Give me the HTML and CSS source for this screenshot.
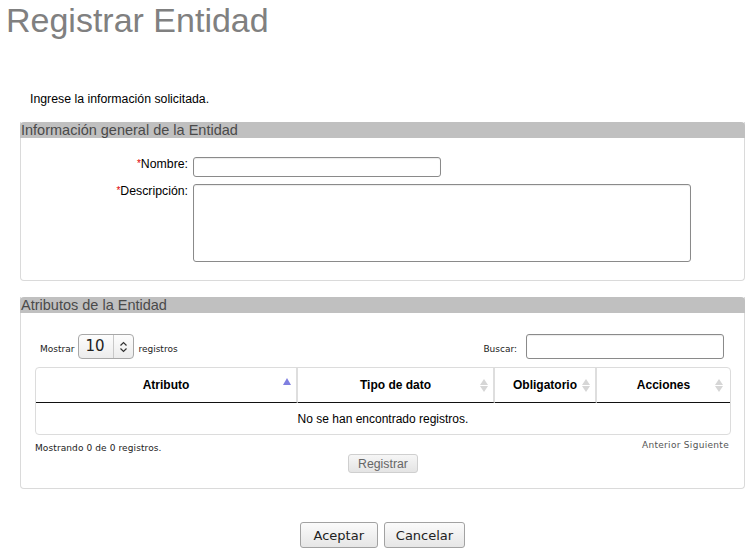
FILE: index.html
```html
<!DOCTYPE html>
<html lang="es">
<head>
<meta charset="utf-8">
<title>Registrar Entidad</title>
<link rel="stylesheet" href="styles.css">
</head>
<body>
<h1 class="page-title">Registrar Entidad</h1>
<p class="intro">Ingrese la información solicitada.</p>

<section class="panel">
  <div class="panel-head">Información general de la Entidad</div>
  <div class="form-grid">
    <label class="field-label" for="nombre"><span class="req">*</span>Nombre:</label>
    <input class="text-input name-input" id="nombre" type="text">
    <label class="field-label" for="descripcion"><span class="req">*</span>Descripción:</label>
    <textarea class="text-input desc-input" id="descripcion"></textarea>
  </div>
</section>

<section class="panel panel-table">
  <div class="panel-head">Atributos de la Entidad</div>
  <div class="table-tools">
    <div class="length">
      <span class="small">Mostrar</span>
      <div class="select-box">
        <span class="select-value">10</span>
        <span class="select-arrow">
          <svg width="9" height="12" viewBox="0 0 9 12"><path d="M1.5 4.5 L4.5 1.5 L7.5 4.5 M1.5 7.5 L4.5 10.5 L7.5 7.5" fill="none" stroke="#333" stroke-width="1.2"/></svg>
        </span>
      </div>
      <span class="small">registros</span>
    </div>
    <div class="search">
      <span class="small">Buscar:</span>
      <input class="text-input search-input" type="text">
    </div>
  </div>

  <table class="data-table">
    <thead>
      <tr>
        <th class="col-a">Atributo<span class="sort sort-asc"><svg width="8" height="7" viewBox="0 0 8 7"><path d="M4 0 L8 7 L0 7 Z" fill="#7f7fe0"/></svg></span></th>
        <th class="col-b">Tipo de dato<span class="sort"><svg width="8" height="13" viewBox="0 0 8 13"><path d="M4 0 L8 6 L0 6 Z M0 7 L8 7 L4 13 Z" fill="#d6d6d6"/></svg></span></th>
        <th class="col-c">Obligatorio<span class="sort"><svg width="8" height="13" viewBox="0 0 8 13"><path d="M4 0 L8 6 L0 6 Z M0 7 L8 7 L4 13 Z" fill="#d6d6d6"/></svg></span></th>
        <th class="col-d">Acciones<span class="sort"><svg width="8" height="13" viewBox="0 0 8 13"><path d="M4 0 L8 6 L0 6 Z M0 7 L8 7 L4 13 Z" fill="#d6d6d6"/></svg></span></th>
      </tr>
    </thead>
    <tbody>
      <tr><td colspan="4" class="empty">No se han encontrado registros.</td></tr>
    </tbody>
  </table>

  <div class="table-foot">
    <span class="small info">Mostrando 0 de 0 registros.</span>
    <span class="small pager">Anterior Siguiente</span>
  </div>
  <div class="register-row">
    <button class="btn btn-disabled" type="button">Registrar</button>
  </div>
</section>

<div class="actions">
  <button class="btn btn-main" type="button">Aceptar</button>
  <button class="btn btn-main" type="button">Cancelar</button>
</div>
</body>
</html>
```

FILE: styles.css
```css
* { box-sizing: border-box; }

body {
  margin: 0;
  font-family: "Liberation Sans", Arial, sans-serif;
  font-size: 12px;
  color: #000;
  background: #fff;
}

.page-title {
  margin: 0 0 0 6px;
  padding-top: 1px;
  font-size: 34px;
  line-height: 38px;
  font-weight: normal;
  color: #808080;
}

.intro {
  margin: 53px 0 0 30px;
  font-size: 12.3px;
  line-height: 14px;
}

.panel {
  margin: 16px 11px 0 20px;
  border: 1px solid #dadada;
  border-top: none;
  border-radius: 0 0 4px 4px;
}

.panel-head {
  margin: 0 -1px;
  height: 16px;
  line-height: 16px;
  font-size: 14.5px;
  color: #4a4a4a;
  background: #c0c0c0;
  border-radius: 4px 4px 0 0;
  padding-left: 1px;
  white-space: nowrap;
}

.form-grid {
  display: grid;
  grid-template-columns: 167px auto;
  column-gap: 5px;
  row-gap: 7px;
  padding: 19px 0 18px;
  align-items: start;
}

.field-label {
  text-align: right;
  font-size: 12.3px;
  line-height: 14px;
}

.req { color: #e00000; font-size: 10px; vertical-align: 1px; }

.text-input {
  display: block;
  margin: 0;
  border: 1px solid #8a8a8a;
  border-radius: 3px;
  background: #fff;
  box-shadow: inset 0 1px 1px rgba(0,0,0,0.08);
  font-family: "Liberation Sans", Arial, sans-serif;
  font-size: 12px;
}

.name-input { width: 248px; height: 20px; }
.desc-input { width: 498px; height: 78px; resize: none; }

.panel-table { padding: 0 13px 15px 14px; }
.panel-table .panel-head { margin: 0 -14px 0 -15px; }

.small {
  font-family: "DejaVu Sans", sans-serif;
  font-size: 9px;
  line-height: 11px;
  color: #222;
}

.table-tools {
  display: flex;
  justify-content: space-between;
  align-items: flex-end;
  margin-top: 21px;
  height: 25px;
  padding-left: 5px;
  padding-right: 7px;
}

.length, .search {
  display: flex;
  align-items: flex-end;
}

.length > .small, .search > .small { margin-bottom: 4px; }
.length .small:first-child { margin-right: 4px; }
.length .small:last-child { margin-left: 4px; }

.select-box {
  display: flex;
  align-items: stretch;
  width: 56px;
  height: 25px;
  border: 1px solid #a8a8a8;
  border-radius: 4px;
  background: linear-gradient(#fdfdfd, #ececec);
}

.select-value {
  flex: 1;
  padding-left: 6px;
  font-family: "DejaVu Sans", sans-serif;
  font-size: 15px;
  line-height: 23px;
  color: #222;
}

.select-arrow {
  width: 20px;
  border-left: 1px solid #c8c8c8;
  display: flex;
  align-items: center;
  justify-content: center;
}

.search .small { margin-right: 9px; }
.search-input { width: 198px; height: 25px; }

.data-table {
  margin-top: 8px;
  width: 696px;
  border-collapse: separate;
  border-spacing: 0;
  border: 1px solid #dcdcdc;
  border-radius: 4px;
  table-layout: fixed;
}

.data-table th {
  position: relative;
  height: 35px;
  font-weight: bold;
  font-size: 12px;
  text-align: center;
  border-bottom: 1px solid #111;
  border-right: 2px solid #dedede;
  padding: 0;
}

.data-table th:last-child { border-right: none; }

.col-a { width: 262px; }
.col-b { width: 197px; }
.col-c { width: 102px; }
.col-d { width: auto; }

.sort {
  position: absolute;
  right: 5px;
  top: 11px;
  line-height: 0;
}

.col-d .sort { right: 7px; }
.sort-asc { top: 10px; }

.empty {
  height: 31px;
  text-align: center;
  font-size: 12px;
  padding: 0;
}

.table-foot {
  display: flex;
  justify-content: space-between;
  align-items: flex-start;
  height: 19px;
  padding-top: 5px;
  padding-right: 2px;
}

.info { margin-top: 3px; letter-spacing: 0.1px; }
.pager { color: #555; letter-spacing: 0.3px; }

.register-row { text-align: center; }

.btn {
  font-family: "DejaVu Sans", sans-serif;
  cursor: pointer;
  margin: 0;
}

.btn-disabled {
  height: 19px;
  padding: 0 9px;
  font-family: "Liberation Sans", Arial, sans-serif;
  font-size: 12.3px;
  color: #666;
  border: 1px solid #cfcfcf;
  border-radius: 3px;
  background: linear-gradient(#f6f6f6, #e4e4e4);
}

.actions {
  margin: 33px 11px 0 20px;
  display: flex;
  justify-content: center;
  gap: 6px;
}

.btn-main {
  min-width: 78px;
  height: 26px;
  padding: 0 11px;
  font-size: 13px;
  color: #222;
  border: 1px solid #a2a2a2;
  border-radius: 3px;
  background: linear-gradient(#fbfbfb, #e6e6e6);
}
```
